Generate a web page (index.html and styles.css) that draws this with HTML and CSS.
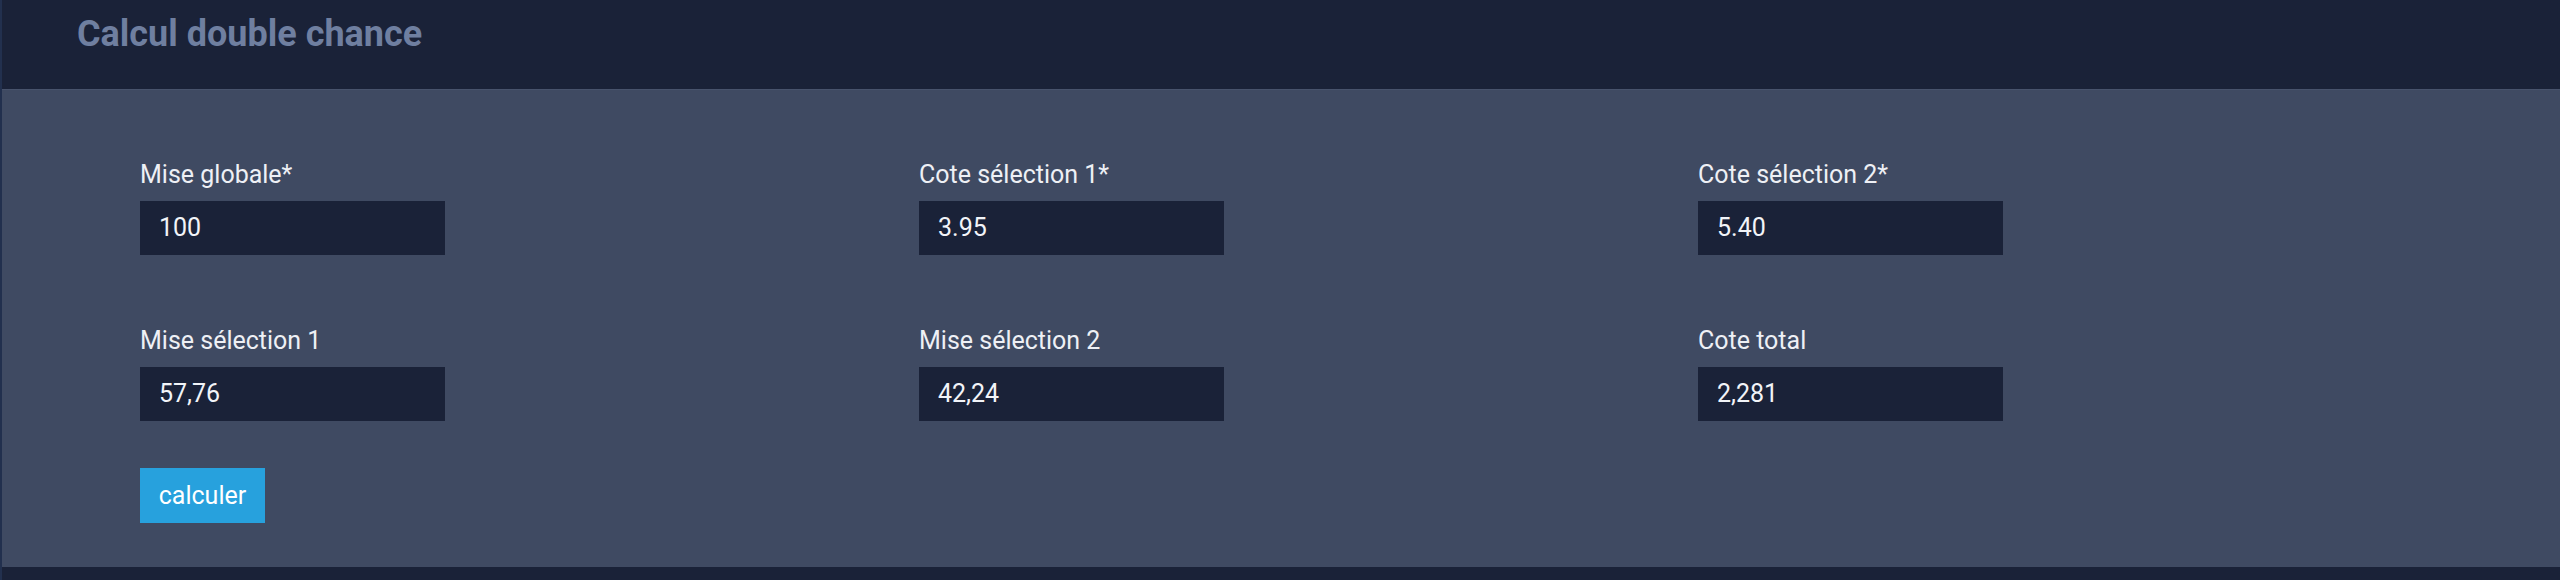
FILE: index.html
```html
<!DOCTYPE html>
<html lang="fr">
<head>
<meta charset="utf-8">
<title>Calcul double chance</title>
<link rel="stylesheet" href="styles.css">
</head>
<body>
<div class="page">
  <header class="header">
    <h1 class="title">Calcul double chance</h1>
  </header>
  <section class="panel">
    <div class="grid">
      <div class="field">
        <label class="label">Mise globale*</label>
        <div class="input">100</div>
      </div>
      <div class="field">
        <label class="label">Cote sélection 1*</label>
        <div class="input">3.95</div>
      </div>
      <div class="field">
        <label class="label">Cote sélection 2*</label>
        <div class="input">5.40</div>
      </div>
      <div class="field">
        <label class="label">Mise sélection 1</label>
        <div class="input">57,76</div>
      </div>
      <div class="field">
        <label class="label">Mise sélection 2</label>
        <div class="input">42,24</div>
      </div>
      <div class="field">
        <label class="label">Cote total</label>
        <div class="input">2,281</div>
      </div>
    </div>
    <button class="btn" type="button">calculer</button>
  </section>
</div>
</body>
</html>
```
FILE: styles.css
```css
html, body {
  margin: 0;
  padding: 0;
  background: #1a2238;
}
body {
  font-family: Roboto, "Liberation Sans", Arial, sans-serif;
  width: 2560px;
  height: 580px;
  overflow: hidden;
}
.page {
  border-left: 2px solid #22304e;
  height: 580px;
  box-sizing: border-box;
}
.header {
  height: 89px;
  box-sizing: border-box;
  padding: 12px 0 0 75px;
  background: #1a2238;
}
.title {
  margin: 0;
  font-size: 36px;
  line-height: 44px;
  font-weight: 700;
  color: #6f7fa0;
  letter-spacing: 0;
}
.panel {
  background: #3f4a62;
  border-top: 1px solid #48536c;
  height: 478px;
  box-sizing: border-box;
  padding: 70px 0 0 138px;
}
.grid {
  display: grid;
  grid-template-columns: 779px 779px 779px;
  row-gap: 71px;
}
.field {
  display: flex;
  flex-direction: column;
  align-items: flex-start;
}
.label {
  display: block;
  font-size: 25px;
  line-height: 30px;
  color: #eef0f5;
  margin-bottom: 11px;
}
.input {
  width: 305px;
  height: 54px;
  box-sizing: border-box;
  background: #1a2238;
  color: #f2f4f8;
  font-size: 25px;
  line-height: 54px;
  padding-left: 19px;
}
.btn {
  display: block;
  margin-top: 47px;
  width: 125px;
  height: 55px;
  border: 0;
  padding: 0;
  background: #27a1dd;
  color: #ffffff;
  font-family: Roboto, "Liberation Sans", Arial, sans-serif;
  font-size: 25px;
  line-height: 55px;
  text-align: center;
  cursor: pointer;
}
```
